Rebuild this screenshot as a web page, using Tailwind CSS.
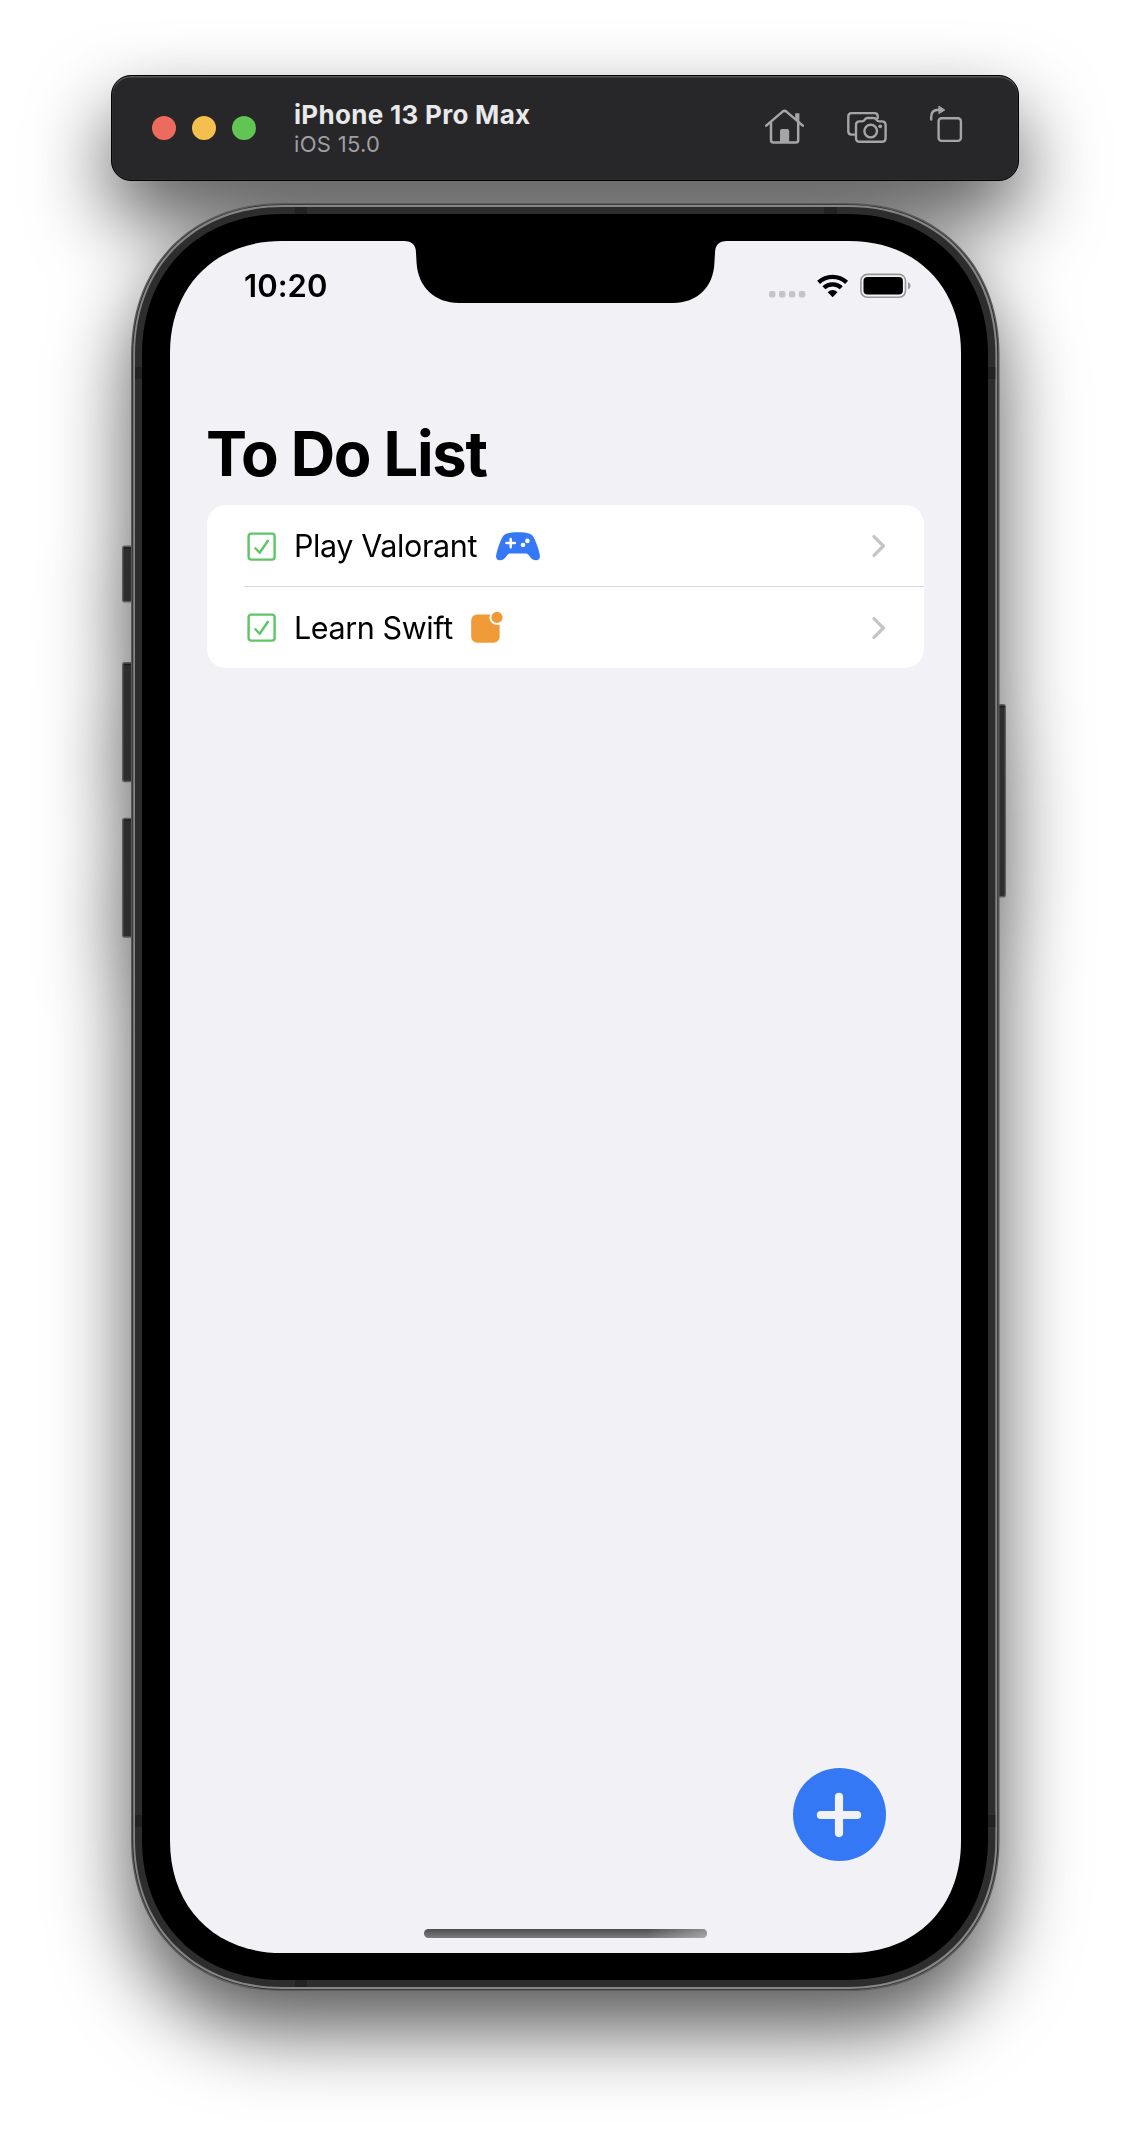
<!DOCTYPE html>
<html lang="en">
<head>
<meta charset="utf-8">
<title>To Do List</title>
<script src="https://cdn.jsdelivr.net/npm/@tailwindcss/browser@4"></script>
</head>
<body class="bg-white font-['Inter',sans-serif] overflow-hidden">
<div class="flex h-[2142px] w-[1130px] flex-col pt-[75px] drop-shadow-[0_38px_40px_rgba(0,0,0,0.66)]">

  <!-- simulator toolbar -->
  <header class="ml-[111px] flex h-[106px] w-[908px] items-center rounded-[20px] border border-black bg-[#272629] pl-10 pr-[55px] shadow-[inset_0_1.5px_0_#555755,inset_0_0_0_1px_#2e2e30]">
    <div class="flex gap-4">
      <span class="size-6 rounded-full bg-[#ed6a5e]"></span>
      <span class="size-6 rounded-full bg-[#f5bf4f]"></span>
      <span class="size-6 rounded-full bg-[#61c554]"></span>
    </div>
    <div class="ml-[38px] flex flex-col pt-px">
      <h2 class="text-[26px] leading-[31px] font-bold tracking-[0.3px] whitespace-nowrap text-[#e9e9ea]">iPhone 13 Pro Max</h2>
      <p class="text-[22px] leading-[28px] tracking-[0.3px] text-[#9f9ea1]">iOS 15.0</p>
    </div>
    <div class="mb-[6px] ml-auto flex items-center">
      <svg class="h-10 w-[42px]" viewBox="763 105 42 40" fill="none" stroke="#a5a4a7" stroke-width="2.5" stroke-linecap="round" stroke-linejoin="round">
        <path d="M766.2 125.6 L782.6 111.6 Q784.5 110.1 786.4 111.6 L802.8 125.6 M771 122 V140 Q771 142.6 773.6 142.6 H795.6 Q798.2 142.6 798.2 140 V122"/>
        <path d="M795.2 113.2 H799.4 V122.6 L795.2 119.2Z" fill="#a5a4a7" stroke="none"/>
        <path d="M780 142.6 V131 Q780 129 782 129 H787.2 Q789.2 129 789.2 131 V142.6Z" fill="#a5a4a7" stroke="none"/>
      </svg>
      <svg class="ml-10 h-10 w-[44px]" viewBox="845 105 44 40" fill="none" stroke="#a5a4a7" stroke-width="2.4" stroke-linejoin="round" stroke-linecap="round">
        <path d="M854.2 134.6 H851.6 Q848.3 134.6 848.3 131.3 V116.4 Q848.3 113.1 851.6 113.1 H874.6 Q877.7 113.1 877.7 116.2 V118"/>
        <path d="M859.6 121.4 H862.2 Q863.6 121.4 864.4 120.2 L865 119.3 Q865.9 118 867.4 118 H873.8 Q875.3 118 876.2 119.3 L876.8 120.2 Q877.6 121.4 879 121.4 H881.8 Q885.6 121.4 885.6 125.2 V138 Q885.6 141.8 881.8 141.8 H859.8 Q856 141.8 856 138 V125.2 Q856 121.4 859.6 121.4Z"/>
        <circle cx="870.7" cy="131.1" r="6.3"/>
        <circle cx="880.2" cy="126.3" r="1.9" fill="#a5a4a7" stroke="none"/>
      </svg>
      <svg class="ml-[38px] h-10 w-[36px]" viewBox="927 105 36 40" fill="none" stroke="#a5a4a7" stroke-width="2.4" stroke-linecap="round">
        <rect x="938.6" y="118.3" width="22.3" height="22.6" rx="3"/>
        <path d="M931.2 119.6 V117 Q931.2 109.8 938.6 109.8 H940"/>
        <path d="M939.2 106.3 L944.8 110 L939.2 113.4Z" fill="#a5a4a7" stroke-width="1" stroke-linejoin="round"/>
      </svg>
    </div>
  </header>

  <!-- device -->
  <main class="relative mt-[22px] ml-[131px] h-[1788px] w-[868px] shrink-0 pt-[38px] pl-[39px]">
    <svg class="absolute -left-[10px] top-0 h-[1788px] w-[888px]" viewBox="121 203 888 1788">
      <g fill="#2d2d2d" stroke="#5c5c5c" stroke-width="1.4">
        <rect x="122.7" y="546.2" width="14" height="55.5" rx="2"/>
        <rect x="122.7" y="662.7" width="14" height="118.8" rx="2"/>
        <rect x="122.7" y="818.5" width="14" height="118.5" rx="2"/>
        <rect x="992" y="704.7" width="13.3" height="192" rx="2"/>
      </g>
      <g fill="#1c1c1c">
        <rect x="124" y="547.5" width="9" height="1.4"/>
        <rect x="124" y="664" width="9" height="1.4"/>
        <rect x="124" y="819.5" width="9" height="1.4"/>
        <rect x="997" y="706" width="7.6" height="1.4"/>
      </g>
      <path data-box="131 203 868.5 1788 142" fill="#5a5a5a"/>
      <path data-box="132.4 204.4 865.7 1785.2 141" fill="#242424"/>
      <path data-box="133.2 205 864.1 1784 140" fill="#858585"/>
      <path data-box="135 207 860.3 1780 138.5" fill="#2d2d2d"/>
      <g fill="#222">
        <rect x="295" y="207" width="12" height="9"/>
        <rect x="824" y="207" width="13" height="9"/>
        <rect x="295" y="1979" width="12" height="8"/>
        <rect x="135" y="367" width="9" height="12"/>
        <rect x="987" y="367" width="8.3" height="12"/>
        <rect x="135" y="1815" width="9" height="12"/>
        <rect x="987" y="1815" width="8.3" height="12"/>
      </g>
      <path data-box="142 214 846 1766 132" fill="#000"/>
      <path data-box="170 241 791 1712 105" fill="#f2f1f6"/>
      <path fill="#000" d="M404 240.5 V241 C412 241 416 245 416 253 L416.6 263 C418 287 435 303 459 303 H673 C697 303 713.6 287 714.4 263 L715 253 C715 245 719 241 727 241 V240.5Z"/>
    </svg>

    <section class="relative flex h-[1712px] w-[791px] flex-col">
      <div class="flex h-[62px] items-end justify-between pr-[50px] pl-[74px]">
        <time class="pb-px text-[31px] leading-[33px] font-semibold tracking-[0.05px]">10:20</time>
        <svg class="h-[34px] w-[144px]" viewBox="767 269 144 34">
          <g fill="#c5c4c9">
            <rect x="769" y="291" width="6.4" height="6.4" rx="1.8"/>
            <rect x="779" y="291" width="6.4" height="6.4" rx="1.8"/>
            <rect x="788.9" y="291" width="6.4" height="6.4" rx="1.8"/>
            <rect x="798.8" y="291" width="6.4" height="6.4" rx="1.8"/>
          </g>
          <g fill="none" stroke="#000" stroke-width="4.3">
            <path d="M818.6 282.4 A20.3 20.3 0 0 1 846.6 282.4"/>
            <path d="M823.9 287.8 A12.6 12.6 0 0 1 841.3 287.8"/>
          </g>
          <path d="M832.6 297.2 L827.7 292.2 A6.8 6.8 0 0 1 837.5 292.2Z"/>
          <rect x="860.9" y="274.4" width="44.6" height="22.8" rx="6.4" fill="none" stroke="#98979b" stroke-width="1.6"/>
          <rect x="863.5" y="277" width="39.4" height="17.4" rx="4"/>
          <path d="M908 282 Q910.6 283 910.6 285.8 Q910.6 288.6 908 289.6Z" fill="#98979b"/>
        </svg>
      </div>

      <h1 class="mt-[109px] pl-[36px] text-[61.5px] leading-[84px] font-bold tracking-[-1.3px]">To Do List</h1>

      <ul class="mt-[9px] ml-[37px] w-[717px] rounded-[19px] bg-white text-[30.5px] tracking-[-0.4px]">
        <li class="flex h-[81px] items-center pt-px pl-[40px]">
          <svg class="size-[29px] shrink-0" viewBox="0 0 29 29" fill="none" stroke="#5ec567" stroke-width="2.4" stroke-linecap="round" stroke-linejoin="round"><rect x="1.6" y="1.6" width="26" height="26" rx="2.6"/><path d="M8.4 16.2 L12.7 20.8 L20.9 8.8"/></svg>
          <span class="ml-[18px] w-[201px] whitespace-nowrap">Play Valorant</span>
          <svg class="h-[30px] w-[46px]" viewBox="0 0 46 30">
            <path fill="#3478f6" d="M12 2.4 C17 .7 29 .7 34 2.4 C36.6 3.3 38 4.6 39.3 7.6 C41.6 12.8 43.9 19 44.8 23.8 C45.6 28.2 43 29.3 40.6 29.3 C38.5 29.3 37.2 28.4 35.8 26.8 L33.2 23.6 C32.5 22.8 32 22.4 30.8 22.4 H15.2 C14 22.4 13.5 22.8 12.8 23.6 L10.2 26.8 C8.8 28.4 7.5 29.3 5.4 29.3 C3 29.3 .4 28.2 1.2 23.8 C2.1 19 4.4 12.8 6.7 7.6 C8 4.6 9.4 3.3 12 2.4Z"/>
            <path d="M11.5 12.1 H19.9 M15.7 7.9 V16.3" stroke="#fff" stroke-width="2.5" stroke-linecap="round"/>
            <circle cx="32.4" cy="9.9" r="2.3" fill="#fff"/><circle cx="28" cy="14" r="2.3" fill="#fff"/>
          </svg>
          <svg class="mr-[38px] ml-auto h-[24px] w-[15px]" viewBox="0 0 15 24" fill="none" stroke="#c5c5c7" stroke-width="3.3" stroke-linecap="round" stroke-linejoin="round"><path d="M3 2.6 L12.4 12 L3 21.4"/></svg>
        </li>
        <li class="ml-[37px] h-px bg-[#dcdcde]"></li>
        <li class="flex h-[81px] items-center pl-[40px]">
          <svg class="size-[29px] shrink-0" viewBox="0 0 29 29" fill="none" stroke="#5ec567" stroke-width="2.4" stroke-linecap="round" stroke-linejoin="round"><rect x="1.6" y="1.6" width="26" height="26" rx="2.6"/><path d="M8.4 16.2 L12.7 20.8 L20.9 8.8"/></svg>
          <span class="ml-[18px] w-[177px] whitespace-nowrap">Learn Swift</span>
          <svg class="mb-[2px] h-[34px] w-[34px]" viewBox="0 0 34 34">
            <rect x=".2" y="4.6" width="28.4" height="28.2" rx="6" fill="#f09a37"/>
            <circle cx="26" cy="7.4" r="6.6" fill="#f09a37" stroke="#fff" stroke-width="2"/>
          </svg>
          <svg class="mr-[38px] ml-auto h-[24px] w-[15px]" viewBox="0 0 15 24" fill="none" stroke="#c5c5c7" stroke-width="3.3" stroke-linecap="round" stroke-linejoin="round"><path d="M3 2.6 L12.4 12 L3 21.4"/></svg>
        </li>
      </ul>

      <button class="mt-auto mr-[75.5px] mb-[68px] flex size-[93px] items-center justify-center self-end rounded-full bg-[#3478f6]" aria-label="Add">
        <svg class="size-[46px]" viewBox="0 0 46 46" stroke="#f2f1f6" stroke-width="8.2" stroke-linecap="round"><path d="M4.9 23 H41.1 M23 4.9 V41.1"/></svg>
      </button>
      <div class="mb-[15px] ml-[254px] h-[9px] w-[283px] overflow-hidden rounded-full bg-linear-to-b from-[#4e4e50] to-[#7c7b7e]">
        <div class="ml-auto h-full w-[60px] bg-linear-to-r from-white/0 to-white/35"></div>
      </div>
    </section>
  </main>
</div>
<script>
  // Rounded rectangles with slightly eased corners: data-box = "x y width height radius"
  document.querySelectorAll('[data-box]').forEach(p => {
    const [x, y, w, h, r] = p.dataset.box.split(' ').map(Number);
    const a = 1.066 * r, c = 0.431 * r, R = x + w, B = y + h;
    p.setAttribute('d',
      `M${x + a} ${y}H${R - a}C${R - c} ${y} ${R} ${y + c} ${R} ${y + a}` +
      `V${B - a}C${R} ${B - c} ${R - c} ${B} ${R - a} ${B}` +
      `H${x + a}C${x + c} ${B} ${x} ${B - c} ${x} ${B - a}` +
      `V${y + a}C${x} ${y + c} ${x + c} ${y} ${x + a} ${y}Z`);
  });
</script>
</body>
</html>
